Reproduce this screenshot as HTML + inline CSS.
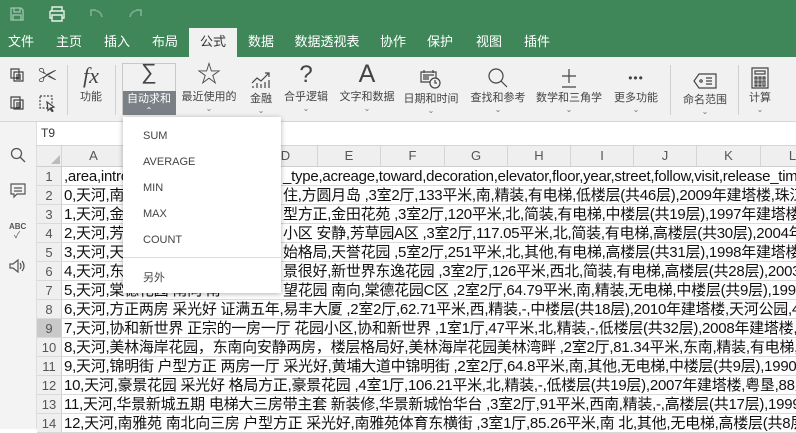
<!DOCTYPE html>
<html><head><meta charset="utf-8"><style>
*{margin:0;padding:0;box-sizing:border-box}
body{width:796px;height:429px;overflow:hidden;position:relative;background:#fff;font-family:"Liberation Sans","Noto Sans CJK SC",sans-serif;}
.abs{position:absolute}
#top{left:0;top:0;width:796px;height:57px;background:#3f8759}
.tab{position:absolute;top:28px;height:29px;line-height:28px;color:#fff;font-size:13px;text-align:center}
#rib{left:0;top:57px;width:796px;height:65px;background:#f1f1f1;border-bottom:1px solid #d6d6d6}
.btn{position:absolute;top:0;width:70px;margin-left:-35px;text-align:center;color:#444;font-size:11px}
.btn .ic{height:32px;display:flex;align-items:flex-end;justify-content:center;font-size:22px;color:#444}
.btn .lb{height:16px;line-height:16px;white-space:nowrap}
.btn .cv{font-size:8px;line-height:8px;color:#777}
.sep{position:absolute;top:8px;width:1px;height:50px;background:#d0d0d0}
#side{left:0;top:122px;width:37px;height:307px;background:#f3f3f3;border-right:1px solid #ddd}
.row{position:absolute;left:37px;width:759px;height:19px;border-bottom:1px solid #dadada;overflow:hidden}
.rh{position:absolute;left:0;top:0;width:25px;height:19px;background:#efefef;border-right:1px solid #cfcfcf;color:#555;font-size:13px;text-align:center;line-height:19px;z-index:2}
.tx{position:absolute;top:0;white-space:nowrap;font-size:15px;line-height:19px;color:#111;letter-spacing:-0.25px}
.ch{position:absolute;top:0;height:20px;line-height:20px;text-align:center;font-size:13px;color:#555;border-right:1px solid #d5d5d5}
#menu{left:123px;top:117px;width:158px;height:176px;background:#fff;box-shadow:0 1px 5px rgba(0,0,0,.3);font-size:11px;color:#444}
#menu div{position:absolute;left:20px}
</style></head><body>
<div id="top" class="abs">
<svg class="abs" style="left:9px;top:6px" width="16" height="16" viewBox="0 0 16 16" fill="none" stroke="#9fc7ad" stroke-width="1.3"><path d="M2 2h10l2 2v10H2z M5 2v4h6V2 M4 14V9h8v5"/></svg>
<svg class="abs" style="left:48px;top:6px" width="18" height="16" viewBox="0 0 18 16" fill="none" stroke="#e6f0ea" stroke-width="1.4"><path d="M4 5V1h10v4 M2 5h14v7h-2 M4 12H2V5 M4 9h10v6H4z"/></svg>
<svg class="abs" style="left:89px;top:8px" width="14" height="10" viewBox="0 0 14 10" fill="none" stroke="#7fb092" stroke-width="1.6"><path d="M2 8V2h5 M2 2c5 0 10 1 11 7"/></svg>
<svg class="abs" style="left:129px;top:8px" width="14" height="10" viewBox="0 0 14 10" fill="none" stroke="#7fb092" stroke-width="1.6"><path d="M12 8V2H7 M12 2C7 2 2 3 1 9"/></svg>
<div class="abs" style="left:189px;top:28px;width:48px;height:29px;background:#f1f1f1"></div>
<div class="tab" style="left:0;width:42px">文件</div>
<div class="tab" style="left:45px;width:48px">主页</div>
<div class="tab" style="left:93px;width:48px">插入</div>
<div class="tab" style="left:141px;width:48px">布局</div>
<div class="tab" style="left:189px;width:48px;color:#333">公式</div>
<div class="tab" style="left:237px;width:48px">数据</div>
<div class="tab" style="left:290px;width:74px">数据透视表</div>
<div class="tab" style="left:369px;width:48px">协作</div>
<div class="tab" style="left:416px;width:48px">保护</div>
<div class="tab" style="left:465px;width:48px">视图</div>
<div class="tab" style="left:513px;width:48px">插件</div>
</div>
<div id="rib" class="abs">
<svg class="abs" style="left:10px;top:11px" width="14" height="14" viewBox="0 0 14 14" fill="none" stroke="#444" stroke-width="1.2"><path d="M1 1h8v9H1z M4 4h9v9H4z M6 7h5 M6 9h5 M6 11h5"/></svg>
<svg class="abs" style="left:10px;top:38px" width="14" height="15" viewBox="0 0 14 15" fill="none" stroke="#444" stroke-width="1.2"><path d="M1 2h9v11H1z M4 5h9v9H4z M6 8h5 M6 10h5 M6 12h5"/></svg>
<div class="abs" style="left:38px;top:4px;font-size:19px;color:#444">✂</div>
<svg class="abs" style="left:39px;top:38px" width="17" height="17" viewBox="0 0 17 17" fill="none" stroke="#444" stroke-width="1.2" stroke-dasharray="2 1.5"><path d="M1 1h12v12H1z"/><path d="M8 7l7 5-3 1 2 3-1 .5-2-3-2 2z" stroke-dasharray="none" fill="#f1f1f1"/></svg>
<div class="sep" style="left:67px"></div>
<div class="btn" style="left:91px"><div class="ic" style="font-family:'Liberation Serif',serif;font-style:italic">fx</div><div class="lb">功能</div></div>
<div class="sep" style="left:115px"></div>
<div class="abs" style="left:122px;top:6px;width:54px;height:52px;border:1px solid #c8c8c8"></div>
<div class="abs" style="left:123px;top:34px;width:53px;height:24px;background:#7b8087"></div>
<div class="btn" style="left:149px"><div class="ic" style="font-size:22px;height:30px;align-items:center">∑</div><div class="lb" style="color:#fff;margin-top:4px">自动求和</div><div class="cv" style="color:#fff">⌃</div></div>
<div class="btn" style="left:209px"><div class="ic" style="font-size:24px">☆</div><div class="lb">最近使用的</div><div class="cv">⌄</div></div>
<div class="btn" style="left:261px"><div class="ic"><svg width="20" height="18" viewBox="0 0 20 18" fill="none" stroke="#444" stroke-width="1.2"><path d="M1 12l5-5 4 3 8-8 M14 2h4v4 M2 17v-2 M6 17v-5 M10 17v-4 M14 17v-6 M18 17v-8"/></svg></div><div class="lb" style="margin-top:2px">金融</div><div class="cv">⌄</div></div>
<div class="btn" style="left:306px"><div class="ic" style="font-size:24px">?</div><div class="lb">合乎逻辑</div><div class="cv">⌄</div></div>
<div class="btn" style="left:367px"><div class="ic" style="font-size:25px">A</div><div class="lb">文字和数据</div><div class="cv">⌄</div></div>
<div class="btn" style="left:431px"><div class="ic"><svg width="22" height="20" viewBox="0 0 22 20" fill="none" stroke="#444" stroke-width="1.2"><path d="M1 3h15v10H1z M4 1v3 M13 1v3 M3 6h11 M3 8h6 M3 10h6"/><circle cx="15" cy="14" r="5" fill="#f1f1f1"/><path d="M15 11v3h2"/></svg></div><div class="lb" style="margin-top:2px">日期和时间</div><div class="cv">⌄</div></div>
<div class="btn" style="left:498px"><div class="ic"><svg width="22" height="22" viewBox="0 0 22 22" fill="none" stroke="#444" stroke-width="1.2"><circle cx="9" cy="9" r="7"/><path d="M14 14l6 6"/></svg></div><div class="lb" style="margin-top:1px">查找和参考</div><div class="cv">⌄</div></div>
<div class="btn" style="left:569px"><div class="ic"><svg width="16" height="22" viewBox="0 0 16 22" fill="none" stroke="#444" stroke-width="1.2"><path d="M1 9h14 M8 2v14 M1 20h14"/></svg></div><div class="lb" style="margin-top:1px">数学和三角学</div><div class="cv">⌄</div></div>
<div class="btn" style="left:636px"><div class="ic" style="height:28px;font-size:12px;letter-spacing:1px">•••</div><div class="lb" style="margin-top:5px">更多功能</div><div class="cv">⌄</div></div>
<div class="sep" style="left:670px"></div>
<div class="btn" style="left:705px"><div class="ic"><svg width="24" height="16" viewBox="0 0 24 16" fill="none" stroke="#444" stroke-width="1.2"><path d="M6 1h17v14H6L1 8z M13 5h6 M13 8h6 M13 11h6"/><circle cx="8" cy="8" r="1.2"/></svg></div><div class="lb" style="margin-top:3px">命名范围</div><div class="cv">⌄</div></div>
<div class="sep" style="left:738px"></div>
<div class="btn" style="left:760px"><div class="ic"><svg width="18" height="22" viewBox="0 0 18 22" fill="none" stroke="#444" stroke-width="1.2"><path d="M1 1h16v20H1z M4 4h10v3H4z M4 10h2v2H4z M8 10h2v2H8z M12 10h2v2h-2z M4 14h2v2H4z M8 14h2v2H8z M12 14h2v5h-2z M4 18h2v1H4z M8 18h2v1H8z"/></svg></div><div class="lb" style="margin-top:1px">计算</div><div class="cv">⌄</div></div>
</div>
<div id="side" class="abs">
<svg class="abs" style="left:10px;top:25px" width="16" height="16" viewBox="0 0 16 16" fill="none" stroke="#555" stroke-width="1.3"><circle cx="6.5" cy="6.5" r="5"/><path d="M10 10l5 5"/></svg>
<svg class="abs" style="left:10px;top:61px" width="16" height="16" viewBox="0 0 16 16" fill="none" stroke="#555" stroke-width="1.2"><path d="M1 1h14v10H7l-3 3v-3H1z M4 5h8 M4 8h8"/></svg>
<div class="abs" style="left:9px;top:100px;font-size:8px;color:#555;font-weight:bold">ABC</div>
<div class="abs" style="left:14px;top:106px;font-size:9px;color:#555">✓</div>
<svg class="abs" style="left:9px;top:137px" width="16" height="14" viewBox="0 0 16 14" fill="none" stroke="#555" stroke-width="1.2"><path d="M1 5h3l5-4v12l-5-4H1z M11 4q2 3 0 6 M13 2q4 5 0 10"/></svg>
</div>
<div class="abs" style="left:37px;top:122px;width:759px;height:24px;background:#fff;border-bottom:1px solid #d6d6d6;font-size:12px;color:#333;line-height:22px;padding-left:4px">T9</div>
<div class="abs" style="left:37px;top:146px;width:759px;height:21px;background:#efefef;border-bottom:1px solid #cfcfcf">
<div class="ch" style="left:0;width:25px"></div>
<div class="abs" style="left:14px;top:9px;width:0;height:0;border-left:9px solid transparent;border-bottom:9px solid #bbb"></div>
<div class="ch" style="left:25px;width:64px">A</div>
<div class="ch" style="left:89px;width:64px">B</div>
<div class="ch" style="left:153px;width:64px">C</div>
<div class="ch" style="left:217px;width:64px">D</div>
<div class="ch" style="left:281px;width:63px">E</div>
<div class="ch" style="left:344px;width:64px">F</div>
<div class="ch" style="left:408px;width:63px">G</div>
<div class="ch" style="left:471px;width:63px">H</div>
<div class="ch" style="left:534px;width:63px">I</div>
<div class="ch" style="left:597px;width:63px">J</div>
<div class="ch" style="left:660px;width:64px">K</div>
<div class="ch" style="left:724px;width:64px">L</div>
</div>
<div class="row" style="top:167px"><div class="rh">1</div><div class="tx" style="left:27px">,area,intro</div><div class="tx" style="left:246px">_type,acreage,toward,decoration,elevator,floor,year,street,follow,visit,release_time,price</div></div>
<div class="row" style="top:186px"><div class="rh">2</div><div class="tx" style="left:27px">0,天河,南向</div><div class="tx" style="left:246px">住,方圆月岛 ,3室2厅,133平米,南,精装,有电梯,低楼层(共46层),2009年建塔楼,珠江新城</div></div>
<div class="row" style="top:205px"><div class="rh">3</div><div class="tx" style="left:27px">1,天河,金田</div><div class="tx" style="left:246px">型方正,金田花苑 ,3室2厅,120平米,北,简装,有电梯,中楼层(共19层),1997年建塔楼,天河</div></div>
<div class="row" style="top:224px"><div class="rh">4</div><div class="tx" style="left:27px">2,天河,芳草</div><div class="tx" style="left:246px">小区 安静,芳草园A区 ,3室2厅,117.05平米,北,简装,有电梯,高楼层(共30层),2004年建塔楼</div></div>
<div class="row" style="top:243px"><div class="rh">5</div><div class="tx" style="left:27px">3,天河,天誉</div><div class="tx" style="left:246px">始格局,天誉花园 ,5室2厅,251平米,北,其他,有电梯,高楼层(共31层),1998年建塔楼,天河</div></div>
<div class="row" style="top:262px"><div class="rh">6</div><div class="tx" style="left:27px">4,天河,东逸</div><div class="tx" style="left:246px">景很好,新世界东逸花园 ,3室2厅,126平米,西北,简装,有电梯,高楼层(共28层),2003年建塔楼</div></div>
<div class="row" style="top:281px"><div class="rh">7</div><div class="tx" style="left:27px">5,天河,棠德花园 南向 南</div><div class="tx" style="left:246px">望花园 南向,棠德花园C区 ,2室2厅,64.79平米,南,精装,无电梯,中楼层(共9层),1997年建</div></div>
<div class="row" style="top:300px"><div class="rh">8</div><div class="tx" style="left:27px">6,天河,方正两房 采光好 证满五年,易丰大厦 ,2室2厅,62.71平米,西,精装,-,中楼层(共18层),2010年建塔楼,天河公园,40</div></div>
<div class="row" style="top:319px"><div class="rh" style="background:#c9c9c9">9</div><div class="tx" style="left:27px">7,天河,协和新世界 正宗的一房一厅 花园小区,协和新世界 ,1室1厅,47平米,北,精装,-,低楼层(共32层),2008年建塔楼,天河</div></div>
<div class="row" style="top:338px"><div class="rh">10</div><div class="tx" style="left:27px">8,天河,美林海岸花园，东南向安静两房，楼层格局好,美林海岸花园美林湾畔 ,2室2厅,81.34平米,东南,精装,有电梯,中</div></div>
<div class="row" style="top:357px"><div class="rh">11</div><div class="tx" style="left:27px">9,天河,锦明街 户型方正 两房一厅 采光好,黄埔大道中锦明街 ,2室2厅,64.8平米,南,其他,无电梯,中楼层(共9层),1990年</div></div>
<div class="row" style="top:376px"><div class="rh">12</div><div class="tx" style="left:27px">10,天河,豪景花园 采光好 格局方正,豪景花园 ,4室1厅,106.21平米,北,精装,-,低楼层(共19层),2007年建塔楼,粤垦,88人</div></div>
<div class="row" style="top:395px"><div class="rh">13</div><div class="tx" style="left:27px">11,天河,华景新城五期 电梯大三房带主套 新装修,华景新城怡华台 ,3室2厅,91平米,西南,精装,-,高楼层(共17层),1999</div></div>
<div class="row" style="top:414px"><div class="rh">14</div><div class="tx" style="left:27px">12,天河,南雅苑 南北向三房 户型方正 采光好,南雅苑体育东横街 ,3室1厅,85.26平米,南 北,其他,无电梯,高楼层(共8层)</div></div>
<div id="menu" class="abs">
<div style="top:13px">SUM</div>
<div style="top:39px">AVERAGE</div>
<div style="top:65px">MIN</div>
<div style="top:91px">MAX</div>
<div style="top:117px">COUNT</div>
<div style="left:0;top:140px;width:158px;height:1px;background:#ddd"></div>
<div style="top:152px">另外</div>
</div>
</body></html>
